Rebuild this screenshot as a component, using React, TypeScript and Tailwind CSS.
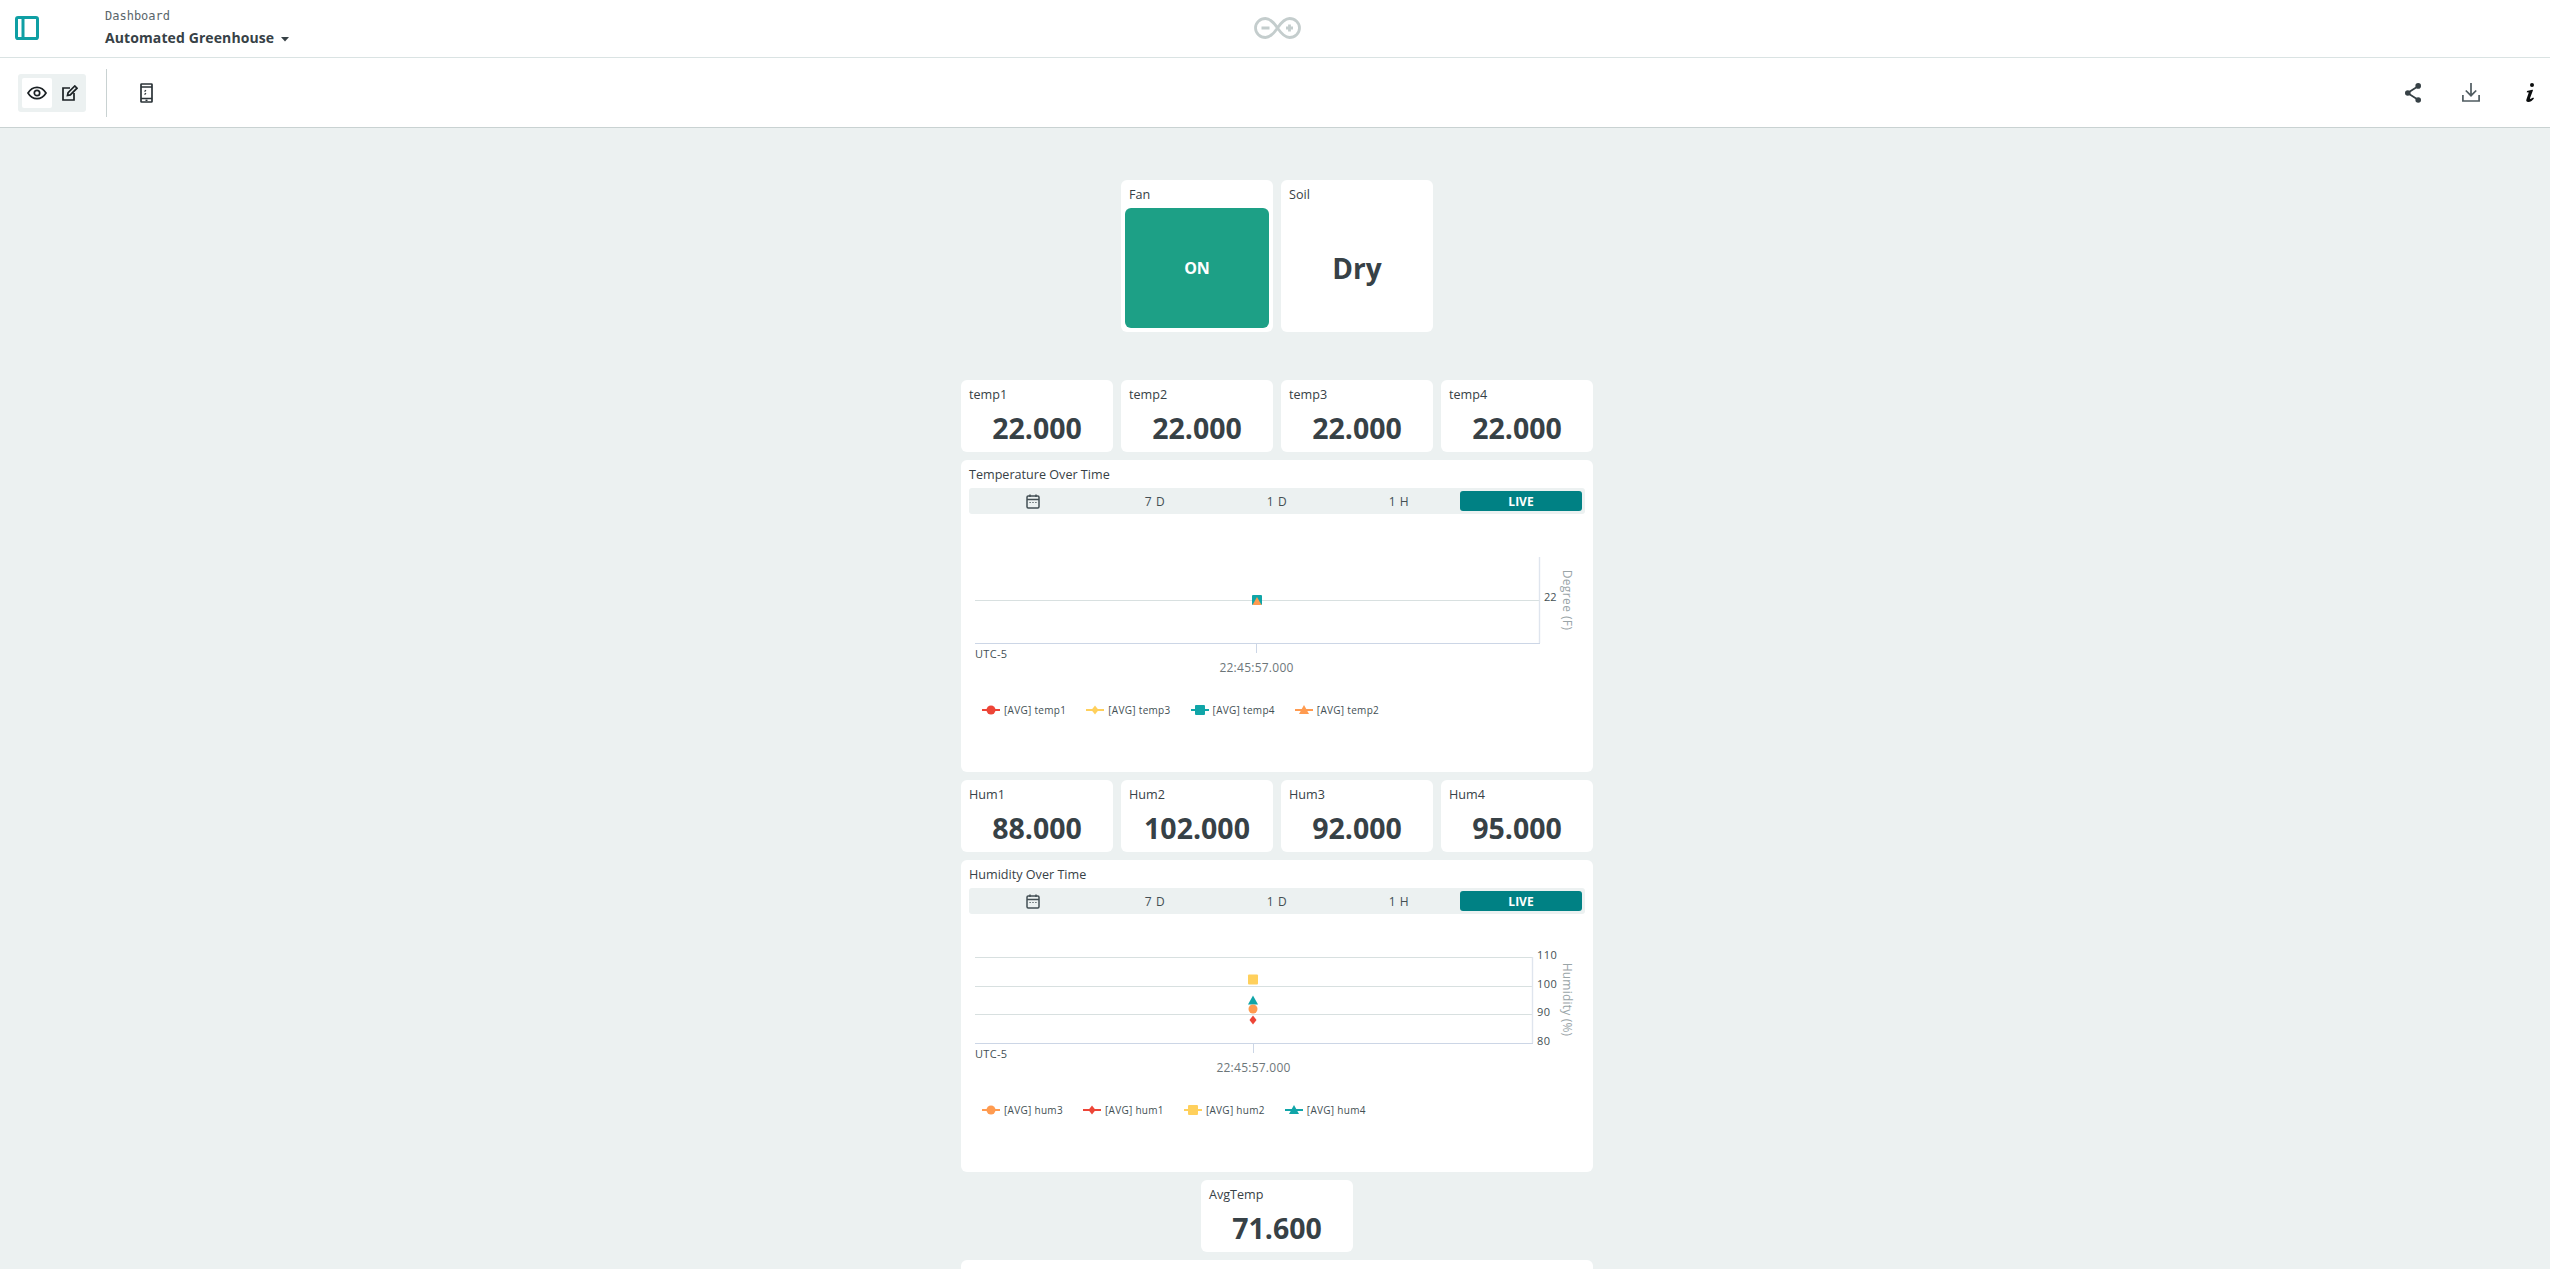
import React from "react";

const RED = "#ed4537";
const YEL = "#ffd05c";
const TEAL = "#10a5a8";
const ORG = "#ff9b50";

type Shape = "circle" | "diamond" | "square" | "triangle";

function Mark({ shape, color, x, y, s = 5 }: { shape: Shape; color: string; x: number; y: number; s?: number }) {
  if (shape === "circle") return <circle cx={x} cy={y} r={s - 0.5} fill={color} />;
  if (shape === "square") return <rect x={x - s} y={y - s} width={s * 2} height={s * 2} rx={1} fill={color} />;
  if (shape === "diamond") return <polygon points={`${x},${y - s} ${x + s - 1},${y} ${x},${y + s} ${x - s + 1},${y}`} fill={color} />;
  return <polygon points={`${x},${y - s} ${x + s},${y + s - 1} ${x - s},${y + s - 1}`} fill={color} />;
}

function Tile({ label, value }: { label: string; value: string }) {
  return (
    <div className="w-[152px] h-[72px] bg-white rounded-[6px] flex flex-col">
      <div className="pl-2 pt-[6px] text-[12.6px] leading-[18px] text-[#374146]">{label}</div>
      <div className="text-center text-[28.5px] leading-[36px] font-bold text-[#374146] mt-[6px]">{value}</div>
    </div>
  );
}

function CalendarIcon() {
  return (
    <svg width="14" height="15" viewBox="0 0 14 15" fill="none" stroke="#434f54" strokeWidth="1.5">
      <rect x="1" y="2" width="12" height="12" rx="1.2" />
      <path d="M1 5.500h12M4 0.500v2.500M10 0.500v2.500" />
      <path d="M3.500 8.500h1.200M6.400 8.500h1.200M9.300 8.500h1.200" strokeWidth="1.200" />
    </svg>
  );
}

function Tabs() {
  return (
    <div className="mx-2 h-[26px] bg-[#ecf1f1] rounded-[3px] p-[3px] grid grid-cols-5 mt-[1px]">
      <div className="flex items-center justify-center"><CalendarIcon /></div>
      {["7 D", "1 D", "1 H"].map((t) => (
        <div key={t} className="flex items-center justify-center pt-[1px] text-[12px] tracking-[0.6px] text-[#434f54]">{t}</div>
      ))}
      <div className="flex items-center justify-center pt-[1px] text-[12px] font-bold text-white bg-[#008184] rounded-[3px]">LIVE</div>
    </div>
  );
}

function Legend({ items, gap }: { items: { label: string; shape: Shape; color: string }[]; gap: string }) {
  return (
    <div className={`h-5 pl-[21px] flex items-center ${gap}`}>
      {items.map((it) => (
        <div key={it.label} className="flex items-center gap-1">
          <svg width="18" height="12" viewBox="0 0 18 12">
            <line x1="0" x2="18" y1="6" y2="6" stroke={it.color} strokeWidth="2" />
            <Mark shape={it.shape} color={it.color} x={9} y={6} s={it.shape === "diamond" ? 4.5 : 5} />
          </svg>
          <span className="text-[10px] leading-[12px] tracking-[0.3px] text-[#434f54] whitespace-nowrap">{it.label}</span>
        </div>
      ))}
    </div>
  );
}

const axisText = "text-[11px] fill-[#434f54]";

function TempChart() {
  return (
    <svg width="632" height="186" viewBox="0 0 632 186" className="block">
      <line x1="14" x2="578" y1="86.5" y2="86.5" stroke="#d8e0e0" />
      <line x1="578.5" x2="578.5" y1="43" y2="129" stroke="#dfe5ee" strokeWidth="1.4" />
      <line x1="14" x2="579" y1="129.5" y2="129.5" stroke="#ccd6e6" />
      <line x1="295.5" x2="295.5" y1="129" y2="139" stroke="#ccd6e6" />
      <text x="14" y="141" dominantBaseline="middle" className="text-[11px] tracking-[0.3px] fill-[#434f54]">UTC-5</text>
      <text x="295.5" y="155" dominantBaseline="middle" textAnchor="middle" className="text-[12px] tracking-[0.25px] fill-[#6d7679]">22:45:57.000</text>
      <text x="583" y="84" dominantBaseline="middle" className={axisText}>22</text>
      <text x="605" y="86" dominantBaseline="middle" textAnchor="middle" transform="rotate(90 605 86)" className="text-[12px] tracking-[0.4px] fill-[#9aa5a8]">Degree (F)</text>
      <Mark shape="square" color={TEAL} x={296} y={86} />
      <polygon points="296,83 300.500,91 291.500,91" fill={ORG} />
    </svg>
  );
}

function HumChart() {
  return (
    <svg width="632" height="186" viewBox="0 0 632 186" className="block">
      {[43, 72, 100].map((y) => (
        <line key={y} x1="14" x2="571" y1={y + 0.5} y2={y + 0.5} stroke="#d8e0e0" />
      ))}
      <line x1="571.5" x2="571.5" y1="43" y2="129" stroke="#dfe5ee" strokeWidth="1.4" />
      <line x1="14" x2="572" y1="129.5" y2="129.5" stroke="#ccd6e6" />
      <line x1="292.5" x2="292.5" y1="129" y2="139" stroke="#ccd6e6" />
      <text x="14" y="141" dominantBaseline="middle" className="text-[11px] tracking-[0.3px] fill-[#434f54]">UTC-5</text>
      <text x="292.5" y="155" dominantBaseline="middle" textAnchor="middle" className="text-[12px] tracking-[0.25px] fill-[#6d7679]">22:45:57.000</text>
      {[["110", 42], ["100", 71], ["90", 99], ["80", 128]].map(([t, y]) => (
        <text key={t as string} x="576" y={y as number} dominantBaseline="middle" className={axisText + " tracking-[0.5px]"}>{t}</text>
      ))}
      <text x="605" y="85.500" dominantBaseline="middle" textAnchor="middle" transform="rotate(90 605 85.500)" className="text-[12px] tracking-[0.2px] fill-[#9aa5a8]">Humidity (%)</text>
      <Mark shape="square" color={YEL} x={292} y={65.5} />
      <Mark shape="triangle" color={TEAL} x={292} y={86.5} />
      <Mark shape="circle" color={ORG} x={292} y={95} s={5} />
      <Mark shape="diamond" color={RED} x={292} y={106} s={4.5} />
    </svg>
  );
}

function ChartCard({ title, children, legend }: { title: string; children: React.ReactNode; legend: React.ReactNode }) {
  return (
    <div className="w-[632px] h-[312px] bg-white rounded-[6px] flex flex-col overflow-hidden">
      <div className="pl-2 pt-[6px] text-[12.6px] leading-[18px] h-[27px] text-[#374146]">{title}</div>
      <Tabs />
      {children}
      {legend}
    </div>
  );
}

function Row({ children }: { children: React.ReactNode }) {
  return <div className="flex justify-center gap-2">{children}</div>;
}

export default function App() {
  return (
    <div className="h-screen overflow-hidden flex flex-col bg-[#ecf1f1] font-['Open_Sans',sans-serif] text-[#374146]">
      {/* top bar */}
      <header className="h-[58px] shrink-0 bg-white border-b border-[#dae3e3] flex relative">
        <div className="w-[105px] shrink-0 pl-[15px] pt-4">
          <svg width="24" height="24" viewBox="0 0 24 24" fill="none" stroke="#0f9fa4" strokeWidth="3" className="block">
            <rect x="1.500" y="1.500" width="21" height="21" rx="1.600" />
            <line x1="8" x2="8" y1="1.500" y2="22.500" />
          </svg>
        </div>
        <div className="pt-[7px]">
          <div className="font-['DejaVu_Sans_Mono',monospace] text-[12px] leading-[18px] text-[#5a666b]">Dashboard</div>
          <div className="mt-[3px] flex items-center gap-[7px] text-[14px] tracking-[0.1px] leading-[20px] font-bold text-[#374146]">
            Automated Greenhouse
            <svg width="8" height="5" viewBox="0 0 8 5" className="mt-[2px]"><path d="M0 0h8L4 4.500z" fill="#374146" /></svg>
          </div>
        </div>
        <svg width="47" height="22" viewBox="0 0 47 22" fill="none" stroke="#c4cdcd" strokeWidth="2.800" className="absolute left-[1254px] top-[16.5px]">
          <path d="M11.500 1.500c4.800 0 8 3.600 12 9.500 4-5.900 7.200-9.500 12-9.500 5.500 0 10 4.300 10 9.500s-4.500 9.500-10 9.500c-4.800 0-8-3.600-12-9.500-4 5.900-7.200 9.500-12 9.500-5.500 0-10-4.300-10-9.500s4.500-9.500 10-9.500z" />
          <path d="M7.500 11h8M32 11h7M35.500 7.500v7" />
        </svg>
      </header>

      {/* toolbar */}
      <div className="h-[70px] shrink-0 bg-white border-b border-[#c9d2d2] flex items-center">
        <div className="ml-[18px] w-[68px] h-[38px] bg-[#ecf1f1] rounded-[3px] p-1 flex">
          <div className="w-[30px] h-[30px] bg-white rounded-[2px] flex items-center justify-center">
            <svg width="20" height="14" viewBox="0 0 20 14" fill="none" stroke="#1b2124" strokeWidth="1.700">
              <path d="M1 7c2.300-3.800 5.300-5.700 9-5.700S16.700 3.200 19 7c-2.300 3.800-5.300 5.700-9 5.700S3.300 10.800 1 7z" />
              <circle cx="10" cy="7" r="2.700" />
            </svg>
          </div>
          <div className="flex-1 flex items-center justify-center pl-[5px]">
            <svg width="16" height="16" viewBox="0 0 16 16" fill="none" stroke="#1b2124" strokeWidth="1.700">
              <path d="M8 3H1v12h11V8" />
              <path d="M5.500 10.500l.6-2.800L12.800 1l2.200 2.200-6.700 6.700z" />
            </svg>
          </div>
        </div>
        <div className="ml-5 w-px h-12 bg-[#c9d2d2]" />
        <div className="ml-[33px]">
          <svg width="13" height="20" viewBox="0 0 13 20" fill="none" stroke="#2b3337" strokeWidth="1.700" className="block">
            <rect x="1" y="1" width="11" height="18" rx="0.600" />
            <path d="M1 4h11M1 15.500h11" />
            <path d="M4.500 8.500l1.500-1.300M4.500 11.500l1.500-1.300" strokeWidth="1.200" />
            <path d="M5.500 17.300h2" strokeWidth="1.400" />
          </svg>
        </div>
        <div className="ml-auto flex items-center mr-[15px]">
          <svg width="16" height="20" viewBox="0 0 16 20" fill="#374146" className="block">
            <path d="M13.500 3L2.500 10l11 7" fill="none" stroke="#374146" strokeWidth="1.800" />
            <circle cx="13.200" cy="2.900" r="2.800" />
            <circle cx="2.800" cy="10" r="2.800" />
            <circle cx="13.200" cy="17" r="2.800" />
          </svg>
          <svg width="18" height="19" viewBox="0 0 18 19" fill="none" stroke="#4f5b60" strokeWidth="1.700" className="block ml-[41px]">
            <path d="M9 0v12.500M3.800 7.500L9 12.700l5.200-5.200" />
            <path d="M.9 12v6h16.200v-6" />
          </svg>
          <svg width="10" height="20" viewBox="0 0 10 20" fill="#0b0d0e" className="block ml-[45px]">
            <circle cx="7" cy="2" r="2" />
            <path d="M2 8l5.200-1.200c.5-.1.900.3.700.8L5 15.200c-.2.600.4.900.9.600l2.300-1.400.8 1.100c-1.500 1.700-3.300 3.500-5.700 3.500-1.800 0-2.400-1.100-1.900-2.500l2.200-6.400c.2-.6-.1-.9-.7-.8L1.800 9.600z" />
          </svg>
        </div>
      </div>

      {/* dashboard */}
      <main className="flex-1 min-h-0 pt-[52px] pl-[4px] flex flex-col gap-2">
        <Row>
          <div className="w-[152px] h-[152px] bg-white rounded-[6px] flex flex-col">
            <div className="pl-2 pt-[6px] text-[12.6px] leading-[18px] text-[#374146]">Fan</div>
            <div className="mx-1 mt-[4px] h-[120px] bg-[#1da086] rounded-[6px] flex items-center justify-center text-[16px] font-bold text-white">ON</div>
          </div>
          <div className="w-[152px] h-[152px] bg-white rounded-[6px] flex flex-col">
            <div className="pl-2 pt-[6px] text-[12.6px] leading-[18px] text-[#374146]">Soil</div>
            <div className="h-[120px] mt-[4px] flex items-center justify-center text-[28px] font-bold text-[#374146]">Dry</div>
          </div>
        </Row>
        <div className="mt-10">
          <Row>
            <Tile label="temp1" value="22.000" />
            <Tile label="temp2" value="22.000" />
            <Tile label="temp3" value="22.000" />
            <Tile label="temp4" value="22.000" />
          </Row>
        </div>
        <Row>
          <ChartCard
            title="Temperature Over Time"
            legend={
              <Legend
                gap="gap-[20px]"
                items={[
                  { label: "[AVG] temp1", shape: "circle", color: RED },
                  { label: "[AVG] temp3", shape: "diamond", color: YEL },
                  { label: "[AVG] temp4", shape: "square", color: TEAL },
                  { label: "[AVG] temp2", shape: "triangle", color: ORG },
                ]}
              />
            }
          >
            <TempChart />
          </ChartCard>
        </Row>
        <Row>
          <Tile label="Hum1" value="88.000" />
          <Tile label="Hum2" value="102.000" />
          <Tile label="Hum3" value="92.000" />
          <Tile label="Hum4" value="95.000" />
        </Row>
        <Row>
          <ChartCard
            title="Humidity Over Time"
            legend={
              <Legend
                gap="gap-[20px]"
                items={[
                  { label: "[AVG] hum3", shape: "circle", color: ORG },
                  { label: "[AVG] hum1", shape: "diamond", color: RED },
                  { label: "[AVG] hum2", shape: "square", color: YEL },
                  { label: "[AVG] hum4", shape: "triangle", color: TEAL },
                ]}
              />
            }
          >
            <HumChart />
          </ChartCard>
        </Row>
        <Row>
          <Tile label="AvgTemp" value="71.600" />
        </Row>
        <Row>
          <div className="w-[632px] h-[312px] shrink-0 bg-white rounded-[6px]" />
        </Row>
      </main>
    </div>
  );
}
